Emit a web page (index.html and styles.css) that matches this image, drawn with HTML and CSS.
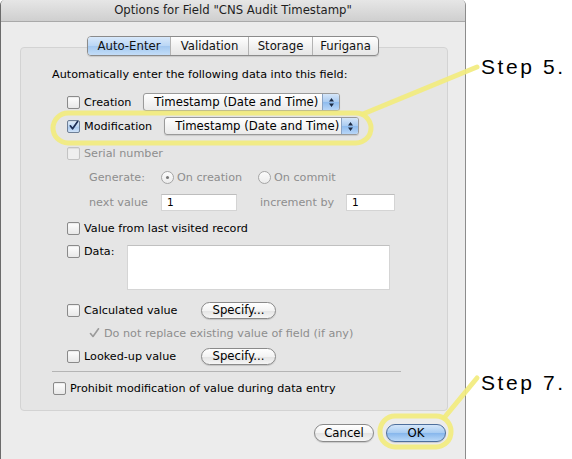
FILE: index.html
```html
<!DOCTYPE html>
<html>
<head>
<meta charset="utf-8">
<title>Options for Field</title>
<link rel="stylesheet" href="styles.css">
</head>
<body>
<div class="stage">
  <div class="window">
    <div class="titlebar">Options for Field "CNS Audit Timestamp"</div>
    <div class="tabs">
      <span class="tab sel t1">Auto-Enter</span><span class="tab t2">Validation</span><span class="tab t3">Storage</span><span class="tab t4">Furigana</span>
    </div>
    <div class="panel">
      <div class="intro">Automatically enter the following data into this field:</div>

      <div class="row r-creation">
        <span class="cb"></span><span class="lbl">Creation</span>
        <span class="popup pw1"><span class="ptext">Timestamp (Date and Time)</span><span class="arrows"><svg width="7" height="11" viewBox="0 0 7 11"><path d="M3.5 1 L6 4.5 H1 Z M3.5 10 L6 6.5 H1 Z" fill="#1c2b44"/></svg></span></span>
      </div>

      <div class="row r-mod">
        <span class="cb on"><svg width="12" height="12" viewBox="0 0 12 12"><path d="M2.5 5.8 L5 9 L10.5 1.2" fill="none" stroke="#1d2e55" stroke-width="1.9" stroke-linecap="round" stroke-linejoin="round"/></svg></span><span class="lbl">Modification</span>
        <span class="popup pw2"><span class="ptext">Timestamp (Date and Time)</span><span class="arrows"><svg width="7" height="11" viewBox="0 0 7 11"><path d="M3.5 1 L6 4.5 H1 Z M3.5 10 L6 6.5 H1 Z" fill="#1c2b44"/></svg></span></span>
      </div>

      <div class="row r-serial dis">
        <span class="cb off"></span><span class="lbl">Serial number</span>
      </div>

      <div class="row r-gen dis">
        <span class="sublbl">Generate:</span>
        <span class="radio sel"><span class="dot"></span></span><span class="rlbl rl1">On creation</span>
        <span class="radio"></span><span class="rlbl">On commit</span>
      </div>

      <div class="row r-next dis">
        <span class="sublbl">next value</span>
        <span class="field f1">1</span>
        <span class="inclbl">increment by</span>
        <span class="field f2">1</span>
      </div>

      <div class="row r-last">
        <span class="cb"></span><span class="lbl">Value from last visited record</span>
      </div>

      <div class="row r-data">
        <span class="cb"></span><span class="lbl dlbl">Data:</span>
        <span class="textarea"></span>
      </div>

      <div class="row r-calc">
        <span class="cb"></span><span class="lbl wlbl">Calculated value</span>
        <span class="btn spec">Specify...</span>
      </div>

      <div class="row r-repl dis">
        <span class="chk"><svg width="11" height="11" viewBox="0 0 11 11"><path d="M1.5 5.5 L4 8.5 L9.5 0.8" fill="none" stroke="#9a9a9a" stroke-width="1.6" stroke-linecap="round" stroke-linejoin="round"/></svg></span><span class="lbl">Do not replace existing value of field (if any)</span>
      </div>

      <div class="row r-look">
        <span class="cb"></span><span class="lbl wlbl">Looked-up value</span>
        <span class="btn spec">Specify...</span>
      </div>

      <div class="sep"></div>

      <div class="row r-prohibit">
        <span class="cb"></span><span class="lbl">Prohibit modification of value during data entry</span>
      </div>
    </div>
    <div class="actions">
      <span class="btn cancel">Cancel</span>
      <span class="btn ok">OK</span>
    </div>
  </div>

  <div class="step step5">Step 5.</div>
  <div class="step step7">Step 7.</div>

  <svg class="callouts" width="572" height="459" viewBox="0 0 572 459">
    <g fill="none" stroke="#f2ec7e" stroke-width="5" stroke-linecap="round" stroke-opacity="0.92">
      <rect x="53" y="113" width="318" height="30" rx="15"/>
      <line x1="363" y1="114" x2="477" y2="67"/>
      <rect x="380" y="416" width="71" height="31" rx="15"/>
      <line x1="444" y1="418" x2="477" y2="378"/>
    </g>
  </svg>
</div>
</body>
</html>
```

FILE: styles.css
```css
* { box-sizing: border-box; }
html, body { margin: 0; padding: 0; background: #fff; }
body {
  font-family: "DejaVu Sans", "Lucida Grande", sans-serif;
  font-size: 11.2px;
  color: #000;
}

.stage {
  position: relative;
  width: 572px;
  height: 459px;
  display: flex;
  overflow: hidden;
  background: #fff;
}

.window {
  width: 466px;
  height: 459px;
  flex: none;
  background: #ececec;
  border-left: 1px solid #6b6b6b;
  border-right: 1px solid #8c8c8c;
  border-radius: 5px 5px 0 0;
  display: flex;
  flex-direction: column;
  overflow: hidden;
}

.titlebar {
  height: 22px;
  flex: none;
  background: linear-gradient(#e6e6e6, #cfcfcf);
  border-bottom: 1px solid #a9a9a9;
  text-align: center;
  line-height: 21px;
  font-size: 11.7px;
  color: #1e1e1e;
}

.tabs {
  margin-top: 14px;
  align-self: center;
  display: flex;
  height: 20px;
  border: 1px solid #8b8b8b;
  border-radius: 4px;
  overflow: hidden;
  position: relative;
  z-index: 2;
  background: linear-gradient(#ffffff, #f1f1f1 50%, #e6e6e6);
  box-shadow: 0 1px 1px rgba(0,0,0,0.12);
}
.tab {
  display: flex;
  align-items: center;
  justify-content: center;
  font-size: 11.7px;
  border-left: 1px solid #b3b3b3;
  color: #111;
}
.tab:first-child { border-left: none; }
.tab.sel {
  background: linear-gradient(#d9e9fb, #b9d6f5 50%, #a3c8f0 51%, #c3ddf8);
}
.t1 { width: 82px; }
.t2 { width: 78px; }
.t3 { width: 64px; }
.t4 { width: 66px; }

.panel {
  margin: -9px 17px 0 19px;
  background: #e5e5e5;
  border: 1px solid #d3d3d3;
  border-radius: 4px;
  padding: 18px 0 13px 31px;
  display: flex;
  flex-direction: column;
}

.intro { height: 18px; line-height: 18px; }

.row {
  display: flex;
  align-items: center;
  height: 18px;
  padding-left: 15px;
}
.dis { color: #8e8e8e; }

.cb {
  width: 13px;
  height: 13px;
  flex: none;
  border: 1px solid #8a8a8a;
  border-radius: 2px;
  background: linear-gradient(#ffffff, #f3f3f3 50%, #e8e8e8);
  box-shadow: inset 0 1px 1px rgba(0,0,0,0.08);
  display: flex;
  align-items: center;
  justify-content: center;
}
.cb.on {
  background: linear-gradient(#e3eefb, #bcd6f2 50%, #a7c8ef 51%, #cfe2f8);
  border-color: #6e7f96;
}
.cb.off { border-color: #c3c3c3; background: #efefef; }

.lbl { margin-left: 4px; white-space: nowrap; }
.r-creation .lbl, .r-mod .lbl { margin-right: 12px; }

.popup {
  height: 18px;
  display: flex;
  align-items: stretch;
  border: 1px solid #9a9a9a;
  border-radius: 3px;
  background: linear-gradient(#ffffff, #f4f4f4 50%, #eaeaea);
  box-shadow: 0 1px 1px rgba(0,0,0,0.12);
  overflow: hidden;
}
.pw1 { width: 197px; }
.pw2 { width: 195px; }
.ptext {
  flex: 1;
  display: flex;
  align-items: center;
  padding-left: 10px;
  font-size: 11.7px;
}
.arrows {
  width: 17px;
  display: flex;
  align-items: center;
  justify-content: center;
  border-left: 1px solid #8aa3c4;
  background: linear-gradient(#d5e6f9, #a9cbf1 50%, #8ebbee 51%, #b8d6f7);
}

.r-creation { margin-top: 9px; }
.r-mod { margin-top: 6px; }
.r-serial { margin-top: 9px; }
.r-gen { margin-top: 6px; padding-left: 37px; }
.r-next { margin-top: 7px; padding-left: 37px; }
.r-last { margin-top: 8px; }
.r-data { margin-top: 7px; height: 46px; align-items: flex-start; padding-top: 1px; }
.r-calc { margin-top: 11px; }
.r-repl { margin-top: 5px; padding-left: 36px; }
.r-look { margin-top: 5px; }
.r-prohibit { margin-top: 7px; padding-left: 1px; }

.sublbl { width: 72px; flex: none; }
.radio {
  width: 13px;
  height: 13px;
  flex: none;
  border: 1px solid #a5a5a5;
  border-radius: 50%;
  background: linear-gradient(#fbfbfb, #ececec);
  display: flex;
  align-items: center;
  justify-content: center;
}
.dot { width: 3px; height: 3px; border-radius: 50%; background: #777; }
.rlbl { margin-left: 3px; }
.rl1 { width: 81px; }

.field {
  height: 17px;
  background: #fff;
  border: 1px solid #d4d4d4;
  border-top-color: #bdbdbd;
  color: #000;
  display: flex;
  align-items: center;
  padding-left: 5px;
  font-size: 10.5px;
}
.f1 { width: 76px; }
.inclbl { margin-left: 23px; width: 86px; }
.f2 { width: 49px; }

.dlbl { width: 43px; margin-top: 0; line-height: 13px; }
.textarea {
  width: 263px;
  height: 45px;
  background: #fff;
  border: 1px solid #d5d5d5;
  border-top-color: #c0c0c0;
}

.wlbl { width: 117px; }
.btn {
  display: flex;
  align-items: center;
  justify-content: center;
  height: 17px;
  border: 1px solid #8a8a8a;
  border-radius: 9px;
  background: linear-gradient(#ffffff, #f3f3f3 50%, #e3e3e3 51%, #f5f5f5);
  box-shadow: 0 1px 1px rgba(0,0,0,0.15);
  font-size: 11.7px;
}
.spec { width: 75px; }

.chk { width: 13px; display: flex; align-items: center; justify-content: center; }
.r-repl .lbl { margin-left: 3px; }

.sep {
  margin: 6px 46px 0 0;
  height: 1px;
  background: #b4b4b4;
}

.actions {
  display: flex;
  justify-content: flex-end;
  gap: 12px;
  margin-top: 13px;
  padding-right: 19px;
}
.cancel { width: 60px; height: 18px; }
.ok {
  width: 60px;
  height: 18px;
  border-color: #4e6f9c;
  background: linear-gradient(#d4e6fa, #a6cbf2 50%, #86b6ec 51%, #b9d8f8);
}

.step {
  position: absolute;
  left: 481px;
  font-family: "Liberation Sans", Arial, sans-serif;
  font-size: 21px;
  letter-spacing: 2.6px;
  color: #000;
  line-height: 24px;
}
.step5 { top: 55px; }
.step7 { top: 371px; }

.callouts {
  position: absolute;
  left: 0;
  top: 0;
  pointer-events: none;
}
```
